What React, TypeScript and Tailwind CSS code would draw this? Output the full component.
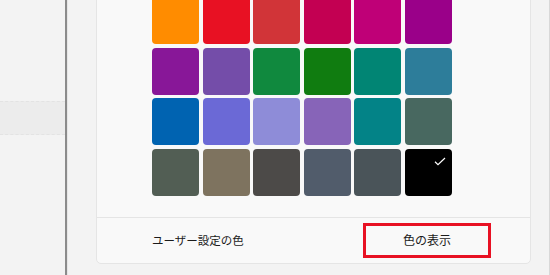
import React from 'react';

const colors = [
  '#ff8c00', '#e81123', '#d13438', '#c30052', '#bf0077', '#9a0089',
  '#881798', '#744da9', '#10893e', '#107c10', '#018574', '#2d7d9a',
  '#0063b1', '#6b69d6', '#8e8cd8', '#8764b8', '#038387', '#486860',
  '#525e54', '#7e735f', '#4c4a48', '#515c6b', '#4a5459', '#000000',
];

export default function App() {
  return (
    <div className="flex h-[275px] w-[550px] overflow-hidden bg-[#f3f3f3] font-['Noto_Sans_CJK_JP','Noto_Sans',sans-serif] text-[#1b1b1b]">
      {/* Sidebar */}
      <div className="w-[65px] shrink-0">
        <div className="mt-[101px] h-[34px] border-y border-dashed border-[#e3e3e3] bg-[#ececec]" />
      </div>
      <div className="w-[2px] shrink-0 bg-[#8b8b8b]" />
      <div className="w-px shrink-0 bg-[#e6e6e6]" />

      {/* Main */}
      <div className="flex flex-1 pl-[28px] pr-[18px]">
        <div className="-mt-[20px] mb-[11px] flex flex-1 flex-col rounded-[5px] border border-[#e5e5e5] bg-[#f9f9f9]">
          <div className="pl-[55px] pt-[16.4px] pb-[21px]">
            <div className="grid w-[300px] grid-cols-[repeat(6,47px)] gap-x-[3.6px] gap-y-[3.4px]">
              {colors.map((c, i) => (
                <div
                  key={i}
                  className="relative h-[47px] rounded-[4px]"
                  style={{ backgroundColor: c }}
                >
                  {i === colors.length - 1 && (
                    <svg
                      className="absolute right-[6px] top-[8px]"
                      width="12"
                      height="9"
                      viewBox="0 0 12 9"
                      fill="none"
                    >
                      <polyline points="1,4.8 4,7.6 11,1" stroke="#fff" strokeWidth="1.2" />
                    </svg>
                  )}
                </div>
              ))}
            </div>
          </div>
          <div className="flex flex-1 items-center justify-between border-t border-[#e5e5e5] pl-[55px] pr-[39px]">
            <span className="text-[11.5px]">ユーザー設定の色</span>
            <button className="flex h-[35px] w-[128px] items-center justify-center border-[3px] border-[#e81123] bg-[#f9f9f9] text-[12px] text-[#1b1b1b]">
              色の表示
            </button>
          </div>
        </div>
      </div>
      <div className="w-px shrink-0 bg-[#d8d8d8]" />
    </div>
  );
}
